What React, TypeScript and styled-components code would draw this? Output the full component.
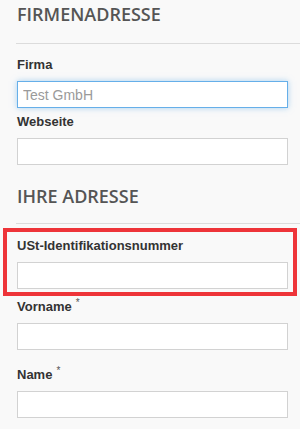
import styled, { createGlobalStyle } from "styled-components";

const GlobalStyle = createGlobalStyle`
  html, body {
    margin: 0;
    padding: 0;
    background: #f9f9f9;
  }
  body {
    font-family: "Liberation Sans", Arial, sans-serif;
    overflow: hidden;
  }
`;

const Form = styled.form`
  padding: 2px 12px 0 17px;
`;

const Heading = styled.h3<{ $top?: number }>`
  margin: ${(p) => p.$top ?? 0}px 0 0;
  font-family: "Open Sans", sans-serif;
  font-weight: 600;
  font-size: 18px;
  line-height: 24px;
  color: #555;
  text-transform: uppercase;
`;

const Divider = styled.hr<{ $top: number; $bottom: number }>`
  margin: ${(p) => p.$top}px -12px ${(p) => p.$bottom}px -1px;
  border: 0;
  border-top: 1px solid #dcdcdc;
  height: 0;
`;

const Field = styled.div<{ $gap?: number }>`
  display: flex;
  flex-direction: column;
  margin-bottom: ${(p) => p.$gap ?? 0}px;
`;

const Label = styled.label`
  font-size: 13px;
  line-height: 16px;
  font-weight: bold;
  color: #333;
  margin-bottom: 8px;
`;

const Required = styled.sup`
  font-size: 10px;
  font-weight: normal;
  color: #555;
  margin-left: 4px;
  vertical-align: 5px;
  line-height: 0;
`;

const Input = styled.input<{ $focused?: boolean }>`
  box-sizing: border-box;
  width: 100%;
  height: 27px;
  margin: 0;
  padding: 0 5px;
  background: #fff;
  border: 1px solid ${(p) => (p.$focused ? "#66afe9" : "#d2d2d2")};
  box-shadow: ${(p) => (p.$focused ? "0 0 6px rgba(102, 175, 233, 0.55)" : "none")};
  font-family: "Liberation Sans", Arial, sans-serif;
  font-size: 14px;
  color: #9a9a9a;
  outline: none;
`;

const Highlight = styled.div`
  margin: 4px -9px 3px -14px;
  padding: 6px 5px 3px 10px;
  border: 4px solid #ee3439;
`;

export default function App() {
  return (
    <>
      <GlobalStyle />
      <Form>
        <Heading>Firmenadresse</Heading>
        <Divider $top={17} $bottom={13} />
        <Field $gap={6}>
          <Label>Firma</Label>
          <Input $focused defaultValue="Test GmbH" />
        </Field>
        <Field>
          <Label>Webseite</Label>
          <Input />
        </Field>
        <Heading $top={19}>Ihre Adresse</Heading>
        <Divider $top={15} $bottom={0} />
        <Highlight>
          <Field>
            <Label>USt-Identifikationsnummer</Label>
            <Input />
          </Field>
        </Highlight>
        <Field $gap={17}>
          <Label>
            Vorname<Required>*</Required>
          </Label>
          <Input />
        </Field>
        <Field>
          <Label>
            Name<Required>*</Required>
          </Label>
          <Input />
        </Field>
      </Form>
    </>
  );
}
